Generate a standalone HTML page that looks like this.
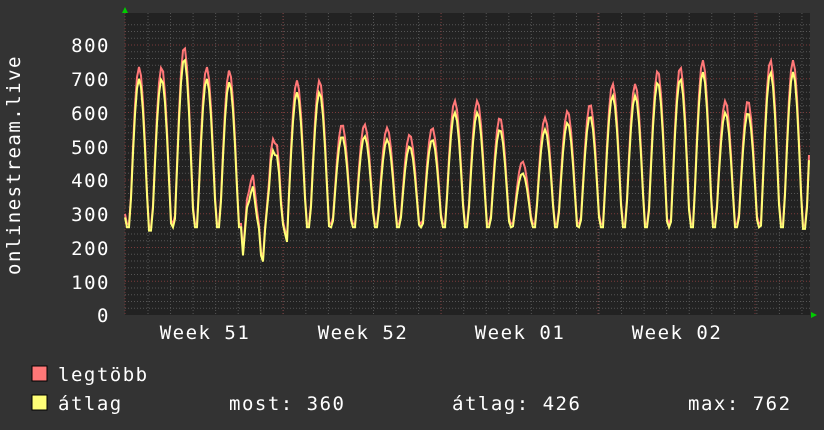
<!DOCTYPE html>
<html><head><meta charset="utf-8"><style>
body{margin:0;background:#333;width:824px;height:430px;overflow:hidden;font-family:"DejaVu Sans Mono","Liberation Mono",monospace;color:#fff}
svg{position:absolute;left:0;top:0}
text{letter-spacing:1.5px}
</style></head><body>
<svg width="824" height="430" id="s" xmlns="http://www.w3.org/2000/svg">
<rect x="125" y="13" width="685" height="302" fill="#222"/>
<g id="grid"></g>
<g id="data"></g>
<polygon points="122,13 128,13 125,7" fill="#0c0"/>
<polygon points="811,312 811,318 817,315" fill="#0c0"/>
<g font-family="DejaVu Sans Mono, Liberation Mono, monospace" font-size="19" fill="#fff" text-anchor="end">
<text x="110" y="52">800</text><text x="110" y="86">700</text><text x="110" y="120">600</text>
<text x="110" y="154">500</text><text x="110" y="187">400</text><text x="110" y="221">300</text>
<text x="110" y="255">200</text><text x="110" y="289">100</text><text x="110" y="322">0</text>
</g>
<g font-family="DejaVu Sans Mono, Liberation Mono, monospace" font-size="19" fill="#fff" text-anchor="middle">
<text x="205" y="339">Week 51</text><text x="363" y="339">Week 52</text>
<text x="520" y="339">Week 01</text><text x="677" y="339">Week 02</text>
</g>
<text transform="translate(20,165) rotate(-90)" font-family="DejaVu Sans Mono, Liberation Mono, monospace" font-size="19" fill="#fff" text-anchor="middle">onlinestream.live</text>
<rect x="32" y="366" width="15" height="15" fill="#f77" stroke="#000"/>
<rect x="32" y="395" width="15" height="15" fill="#ff7" stroke="#000"/>
<g font-family="DejaVu Sans Mono, Liberation Mono, monospace" font-size="19" fill="#fff">
<text x="58" y="381">legtöbb</text>
<text x="58" y="410">átlag</text>
<text x="229" y="410">most: 360</text>
<text x="452" y="410">átlag: 426</text>
<text x="688" y="410">max: 762</text>
</g>
</svg>
<script>
var g=document.getElementById('grid'),d=document.getElementById('data'),h='';
function Y(v){return 315-v*0.3375;}
for(var v=20;v<=860;v+=20){var y=Y(v);if(y<13)break;var maj=v%100==0;h+='<line x1="125" x2="810" y1="'+y+'" y2="'+y+'" stroke="'+(maj?'#7a3a3a':'#555')+'" stroke-dasharray="1,2"/>';}
for(var x=125.5+22.5;x<810;x+=22.55){h+='<line y1="13" y2="315" x1="'+x+'" x2="'+x+'" stroke="#555" stroke-dasharray="1,2"/>';}
[125,283,441,598,755].forEach(function(x){h+='<line y1="13" y2="315" x1="'+x+'" x2="'+x+'" stroke="#7a3a3a" stroke-dasharray="1,2"/>';});
g.innerHTML=h;
var peaks=[450,700,700,760,700,690,370,490,660,660,530,530,520,500,520,600,600,550,420,550,570,590,650,650,690,700,720,600,600,720,720,720];
var tr=[260,250,260,260,260,260,170,230,260,260,260,260,260,260,260,260,260,260,260,260,260,260,260,260,260,260,260,260,260,260,255,255];
var py='',pr='';
for(var x=125;x<=810;x+=2){
 var t=(x-129.5)/22.55+1,i=Math.floor(t),f=t-i;
 var k=Math.min(i,31),p=peaks[k],b=tr[k];
 var s=Math.pow(Math.max(0,Math.sin(Math.PI*Math.min(1,f/0.85))),1.1);
 var v=b+(p-b)*s;
 if(i>=6&&i<=7)v+=Math.sin(x)*15;
 var vr=v+(s>0.2?35*s:10);
 py+=(py?'L':'M')+x+','+Y(v).toFixed(1);pr+=(pr?'L':'M')+x+','+Y(vr).toFixed(1);
}
d.innerHTML='<path d="'+pr+'" fill="none" stroke="#f77" stroke-width="2"/><path d="'+py+'" fill="none" stroke="#ff7" stroke-width="2"/>';
</script>
</body></html>
